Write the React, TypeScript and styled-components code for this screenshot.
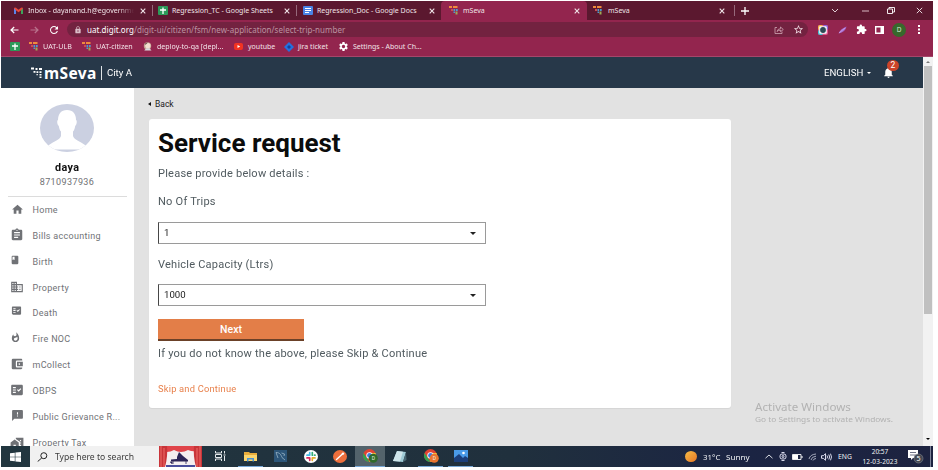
import React from "react";
import styled, { createGlobalStyle } from "styled-components";
import {
  MdHome, MdAssignment, MdBook, MdDomain, MdFactCheck, MdWhatshot,
  MdAccountBalanceWallet, MdFeedback, MdHomeWork, MdNotifications, MdExtension,
  MdSettings, MdLock, MdStarBorder, MdRefresh,
} from "react-icons/md";

const Global = createGlobalStyle`
  * { box-sizing: border-box; }
  body { margin: 0; background: #fff; overflow: hidden; }
  svg { display: block; flex: none; }
`;

const ui = '"Noto Sans", "Open Sans", sans-serif';
const app = 'Roboto, "Liberation Sans", sans-serif';

const Screen = styled.div`
  width: 932px;
  height: 466px;
  margin: 1px 0 0 1px;
  display: flex;
  flex-direction: column;
  overflow: hidden;
  font-family: ${app};
`;

/* A single-line label in a fixed slot; `$sx` stretches the glyphs. */
const Label = styled.span<{ $w?: number; $size: number; $ls?: number; $sx?: number; $ml?: number }>`
  display: block;
  flex: none;
  width: ${(p) => (p.$w ? `${p.$w}px` : "auto")};
  margin-left: ${(p) => p.$ml ?? 0}px;
  font-size: ${(p) => p.$size}px;
  letter-spacing: ${(p) => p.$ls ?? 0}px;
  transform: ${(p) => (p.$sx ? `scaleX(${p.$sx})` : "none")};
  transform-origin: left center;
  white-space: nowrap;
`;
const Slot = styled.span<{ $w: number; $ml?: number; $mt?: number }>`
  display: flex;
  flex: none;
  align-items: center;
  justify-content: center;
  width: ${(p) => p.$w}px;
  margin-left: ${(p) => p.$ml ?? 0}px;
  margin-top: ${(p) => p.$mt ?? 0}px;
`;

/* ---------- Browser chrome ---------- */
const TabStrip = styled.div`
  height: 19px;
  flex: none;
  display: flex;
  align-items: stretch;
  background: #5b182f;
  color: #f0e4e8;
  font-family: ${ui};
`;
const Tab = styled.div<{ $w: number; $pad: number; $end?: number; $active?: boolean; $sep?: boolean }>`
  width: ${(p) => p.$w}px;
  padding-left: ${(p) => p.$pad}px;
  padding-right: ${(p) => p.$end ?? 7}px;
  flex: none;
  display: flex;
  align-items: center;
  border-radius: 4px 4px 0 0;
  background: ${(p) => (p.$active ? "#93254e" : "transparent")};
  background-image: ${(p) => (p.$sep ? "linear-gradient(#96687a, #96687a)" : "none")};
  background-size: 1px 11px;
  background-position: right 4px;
  background-repeat: no-repeat;
`;
const TabTitle = styled(Label)<{ $fade?: boolean }>`
  mask-image: ${(p) => (p.$fade ? "linear-gradient(90deg, #000 85%, transparent)" : "none")};
`;
const Push = styled.span`
  flex: 1;
`;
const Toolbar = styled.div`
  height: 19px;
  flex: none;
  display: flex;
  align-items: center;
  background: #93254e;
  color: #f3dfe6;
  font-family: ${ui};
`;
const Omnibox = styled.div`
  width: 741px;
  height: 15px;
  margin-left: 8px;
  flex: none;
  display: flex;
  align-items: center;
  border-radius: 8px;
  background: #732240;
  color: #bb93a1;
`;
const Host = styled.b`
  font-weight: 400;
  color: #fff;
`;
const Profile = styled.span`
  width: 14px;
  height: 14px;
  margin-left: 8px;
  border-radius: 50%;
  background: #38682c;
  color: #d8ecd0;
  font-size: 6.5px;
  line-height: 14px;
  text-align: center;
`;
const Bookmarks = styled(Toolbar)`
  height: 18px;
  padding-bottom: 2px;
  color: #f2e2e8;
  border-bottom: 1px solid #a5466a;
`;

/* ---------- Application ---------- */
const Viewport = styled.div`
  flex: 1;
  min-height: 0;
  display: flex;
`;
const Page = styled.div`
  width: 922px;
  flex: none;
  display: flex;
  flex-direction: column;
`;
const Header = styled.header`
  height: 31px;
  flex: none;
  display: flex;
  align-items: center;
  background: #273849;
  color: #fff;
`;
const Brand = styled.span`
  width: 55px;
  margin-left: 1px;
  font: 700 15.5px/20px ${ui};
  letter-spacing: 0.4px;
`;
const Rule = styled.span`
  width: 1px;
  height: 14px;
  margin-left: 2px;
  background: #dfe3e6;
`;
const Bell = styled.span`
  position: relative;
  margin-left: 11px;
`;
const Count = styled.span`
  position: absolute;
  left: 5px;
  top: -6px;
  width: 12px;
  height: 11px;
  border-radius: 50%;
  background: #cc4329;
  font-size: 8.5px;
  line-height: 11px;
  text-align: center;
`;
const Columns = styled.div`
  flex: 1;
  min-height: 0;
  display: flex;
  background: #e2e2e2;
`;
const Sidebar = styled.aside`
  width: 133px;
  flex: none;
  overflow: hidden;
  background: #fff;
  color: #6f7174;
`;
const User = styled.div`
  height: 109px;
  margin: 0 7px;
  padding: 16px 1px 0 0;
  display: flex;
  flex-direction: column;
  align-items: center;
  border-bottom: 1px solid #dcdcdc;
`;
const UserName = styled.div`
  margin-top: 9px;
  color: #111;
  font-weight: 700;
  font-size: 10px;
  line-height: 14px;
  letter-spacing: 0.3px;
  transform: scaleX(1.08);
`;
const Phone = styled.div`
  font-size: 9px;
  line-height: 14px;
  letter-spacing: 0.4px;
`;
const NavRow = styled.a`
  height: 25.87px;
  padding-left: 9px;
  display: flex;
  align-items: center;
  color: #707276;
`;
const Main = styled.main`
  width: 582px;
  margin-left: 15px;
  color: #505a5f;
`;
const Back = styled.div`
  height: 31px;
  margin-left: -1px;
  display: flex;
  align-items: center;
  color: #1b1b1b;
`;
const Card = styled.section`
  height: 289px;
  padding: 8px 9px 0;
  border-radius: 3px;
  background: #fff;
  box-shadow: 0 1px 1px rgba(0, 0, 0, 0.06);
`;
const Title = styled.h1`
  margin: 0;
  height: 32px;
  font-size: 26px;
  line-height: 32px;
  font-weight: 700;
  color: #0b0c0c;
  white-space: nowrap;
`;
const Line = styled.div<{ $h: number }>`
  height: ${(p) => p.$h}px;
  display: flex;
  align-items: center;
`;
const Select = styled.div`
  width: 328px;
  height: 22px;
  padding: 0 9px 0 5px;
  display: flex;
  align-items: center;
  justify-content: space-between;
  border: 1px solid #9a9a9a;
  border-left-color: #464646;
  color: #222;
`;
const Next = styled.button`
  width: 146px;
  height: 22px;
  margin-top: 13px;
  padding: 1px 0 0;
  display: block;
  border: 0;
  border-bottom: 2px solid #6b4128;
  background: #e37e48;
  color: #fff;
  font: 500 10.5px/20px ${app};
`;
const Skip = styled(Line)`
  color: #e8814c;
`;
const Watermark = styled.div`
  margin: 312px 0 0 24px;
  font-family: ${ui};
  color: #b2b2b2;
  line-height: 13px;
`;
const Scrollbar = styled.div`
  width: 10px;
  display: flex;
  flex-direction: column;
  align-items: center;
  background: #f2f2f2;
`;
const Thumb = styled.div`
  width: 8px;
  height: 248px;
  margin: 3px 0 124px;
  background: #c0c0c0;
`;

/* ---------- Taskbar ---------- */
const Taskbar = styled.footer`
  height: 21px;
  flex: none;
  display: flex;
  align-items: stretch;
  background: linear-gradient(90deg, #22363f, #20303d 55%, #1b2443 80%, #1d2340);
  color: #f1f3f5;
  font-family: ${ui};
`;
const Search = styled.div`
  width: 129px;
  display: flex;
  align-items: center;
  background: #f1f1f1;
  color: #3c3c3c;
`;
const TaskButton = styled.span<{ $w: number; $open?: boolean; $active?: boolean; $ml?: number }>`
  width: ${(p) => p.$w}px;
  margin-left: ${(p) => p.$ml ?? 0}px;
  flex: none;
  display: flex;
  align-items: center;
  justify-content: center;
  border-bottom: ${(p) => (p.$open ? "1px solid #78a9d8" : "1px solid transparent")};
  background: ${(p) => (p.$active ? "#53636b" : "transparent")};
  background-clip: padding-box;
`;
const Tray = styled.div`
  flex: 1;
  display: flex;
  align-items: center;
`;
const Clock = styled.div`
  width: 38px;
  margin-left: 6px;
  flex: none;
  display: flex;
  flex-direction: column;
  align-items: center;
  line-height: 10px;
`;
const Edge = styled.span`
  width: 1px;
  height: 21px;
  margin-right: 2px;
  background: #7d8399;
`;

/* ---------- Drawings ---------- */
const Close = ({ s = 6, w = 1.1 }: { s?: number; w?: number }) => (
  <svg width={s} height={s} viewBox="0 0 6 6" stroke="currentColor" strokeWidth={w}><path d="M.7.7 5.3 5.3M5.3.7.7 5.3" /></svg>
);
const Gmail = () => (
  <svg width="9" height="7" viewBox="0 0 9 7"><path d="M0 1v6h2V2z" fill="#5a83e8" /><path d="M9 1v6H7V2z" fill="#3fa45b" /><path d="M0 1.2Q.5-.2 2 .8l2.500 2 2.500-2Q8.500-.2 9 1.200L7.500 3 4.500 5.200 1.500 3z" fill="#e9483b" /></svg>
);
const Sheets = () => (
  <svg width="10" height="9" viewBox="0 0 10 9"><rect width="10" height="9" rx="1" fill="#2c9a59" /><path d="M5 1.500v6.500M2 4h6" stroke="#fff" strokeWidth="1.300" /></svg>
);
const Docs = () => (
  <svg width="10" height="9" viewBox="0 0 10 9"><rect width="10" height="9" rx="1" fill="#4a83e4" /><path d="M2 2.500h6M2 4.500h6M2 6.500h4" stroke="#fff" strokeWidth="1" /></svg>
);
const Digit = () => (
  <svg width="9" height="9" viewBox="0 0 9 9">
    <path d="M0 0h3v2H0zM4 0h4.500v2H4z" fill="#ef8a3c" /><path d="M2 3h2v2H2z" fill="#c94f4f" /><path d="M4.500 3h1.700v2H4.500zM7 3h1.700v2H7zM4.500 5.500h1.500v1.500H4.500z" fill="#4c9bd0" /><path d="M6.500 5.500h2v3h-2z" fill="#9dab55" />
  </svg>
);
const MsevaMark = () => (
  <svg width="12" height="12" viewBox="0 0 12 12" fill="#fff">
    <path d="M0 .5h3v2H0zM4.500 1h2v2h-2zM8 1h3v2H8zM2.500 4h2v1.800h-2zM5.500 4.200h1.800V6H5.500zM8.500 4.200h2V6h-2zM5.500 7h1.300v1.300H5.500zM8.500 7h2v1.600h-2zM8.500 9.600h2v1.500h-2z" />
  </svg>
);
const Arrow = ({ flip = false }: { flip?: boolean }) => (
  <svg width="9" height="8" viewBox="0 0 9 8" fill="none" stroke={flip ? "#b9728c" : "#fff"} strokeWidth="1.200">
    <path d={flip ? "M.5 4h7.500M4.800 1 8 4 4.800 7" : "M8.500 4H1M4.200 1 1 4l3.200 3"} />
  </svg>
);
const Share = () => (
  <svg width="10" height="8" viewBox="0 0 10 8" fill="none" stroke="#cfa6b4" strokeWidth=".8"><path d="M3 1.500H1V7.500h7V5.500M3 5.500Q3.500 2.800 6.500 2.700V1L9.300 3.500 6.500 5.700V4.200Q4 4.200 3 5.500z" /></svg>
);
const Jenkins = () => (
  <svg width="9" height="9" viewBox="0 0 9 9"><circle cx="4.500" cy="4" r="3.700" fill="#c5a595" /><circle cx="4.800" cy="3.700" r="2.600" fill="#f2dfd0" /><path d="M1.500 8 3.500 6.200h3L8.500 8.500h-7z" fill="#d9d9dc" /><path d="M1.500 3Q2 .6 5 .6L3.200 2.300z" fill="#6a5248" /></svg>
);
const YouTube = () => (
  <svg width="9" height="7" viewBox="0 0 9 7"><rect width="9" height="7" rx="2" fill="#f23322" /><path d="M3.500 2v3L6.200 3.500z" fill="#fff" /></svg>
);
const Jira = () => (
  <svg width="10" height="10" viewBox="0 0 10 10"><path d="M5 0 10 5 5 10 0 5z" fill="#2371df" /><path d="M5 3 7 5 5 7 3 5z" fill="#16419c" /></svg>
);
const Camera = () => (
  <svg width="10" height="10" viewBox="0 0 10 10"><rect width="10" height="10" rx="2" fill="#e5568c" /><path d="M0 5V2Q0 0 2 0h3z" fill="#f3b64a" /><path d="M5 0h3q2 0 2 2v3z" fill="#8c63dc" /><path d="M0 5v3q0 2 2 2h3z" fill="#3ec7d2" /><rect x="1.200" y="1.200" width="7.600" height="7.600" rx="1" fill="#f4f7fb" /><circle cx="5" cy="5" r="2.900" fill="#2e4a55" /></svg>
);
const Feather = () => (
  <svg width="9" height="8" viewBox="0 0 9 8"><path d="M.5 7.500Q2 3 8.500.5 7.500 6 .5 7.500z" fill="#a66bd0" /><path d="M1 7 7 2" stroke="#dcb8f0" strokeWidth=".6" /></svg>
);
const Avatar = () => (
  <svg width="54" height="48" viewBox="0 0 54 48">
    <defs><clipPath id="oval"><ellipse cx="27" cy="24" rx="27" ry="24" /></clipPath></defs>
    <g clipPath="url(#oval)">
      <path d="M0 0h54v48H0z" fill="#cbd0e1" />
      <path d="M27 6c-6 0-9 4-9 10-1.200 0-1 4.500.8 6 .5 3 1.200 4.500 2.200 5.500V32c-1 4-7 5-12 9L0 45.500h54L45 41c-5-4-11-5-12-9v-4.500c1-1 1.700-2.500 2.200-5.500 1.800-1.500 2-6 .8-6 0-6-3-10-9-10z" fill="#fff" />
    </g>
  </svg>
);
const Caret = ({ w = 6, h = 3 }: { w?: number; h?: number }) => (
  <svg width={w} height={h} viewBox="0 0 6 3" preserveAspectRatio="none"><path d="M0 0h6L3 3z" fill="currentColor" /></svg>
);
const WinLogo = () => (
  <svg width="11" height="10" viewBox="0 0 11 10" fill="#fff"><path d="M0 1.300 4.800.7v4H0zM5.400.6 11 0v4.700H5.400zM0 5.300h4.800v4L0 8.700zM5.400 5.300H11V10l-5.600-.6z" /></svg>
);
const Piano = () => (
  <svg width="43" height="21" viewBox="0 0 43 21">
    <path d="M0 0h43v21H0z" fill="#f4eef0" /><path d="M0 0h43v3Q36 7 29 4q-7 4-14 0Q8 8 0 4z" fill="#e0444a" />
    <path d="M0 0h8Q9 10 6 21H0zM35 0h8v21h-6Q34 10 35 0z" fill="#c93439" />
    <path d="M2 0v21M5 2v19M38 2v19M41 0v21" stroke="#ee6c68" strokeWidth="1" />
    <path d="M18 11 20 6l4 4 5 4v1.500H12V13.500l6-.5z" fill="#2c2457" /><path d="M14 15v3M27 15v3M11 16h2v2" stroke="#2c2457" fill="#2c2457" strokeWidth=".8" /><path d="M7 19h29v2H7z" fill="#4a4e9c" />
  </svg>
);
const TaskView = () => (
  <svg width="11" height="10" viewBox="0 0 11 10" fill="none" stroke="#e5e9eb" strokeWidth="1"><path d="M.5 0v2h6V0M.5 10V8h6v2M.5 3.500h6v3h-6zM9.500 0v2.500M9.500 5v5" /><path d="M8.500 4h2" /></svg>
);
const Folder = () => (
  <svg width="13" height="11" viewBox="0 0 13 11"><path d="M0 1h5l1 1h7v8H0z" fill="#e9ad3c" /><path d="M0 4h13v6H0z" fill="#fbd66f" /><path d="M3 7h7v3.500H8.500V8.500h-4v2H3z" fill="#4b94d4" /></svg>
);
const Dolphin = () => (
  <svg width="13" height="12" viewBox="0 0 13 12"><rect width="13" height="12" fill="#2c5578" /><path d="M2 2.500c4 0 5 2.500 6 5l3 2.500M2 2.500l2 5.500M7.500 3l3 1-.5 2" fill="none" stroke="#a9c1d0" strokeWidth=".7" /></svg>
);
const Slack = () => (
  <svg width="14" height="13" viewBox="0 0 14 13"><ellipse cx="7" cy="6.500" rx="7" ry="6.500" fill="#fff" /><g strokeWidth="1.700" strokeLinecap="round"><path d="M5.700 2.500v2.700M3 5.200h2" stroke="#41bce8" /><path d="M8.300 2.500v2.700M11 5.200h-.5" stroke="#35ad79" /><path d="M8.300 7.900H11M8.300 10.300V8" stroke="#e4ad2f" /><path d="M5.700 7.900v2.400M3 7.900h2" stroke="#d92b5f" /></g></svg>
);
const Postman = () => (
  <svg width="14" height="13" viewBox="0 0 14 13"><ellipse cx="7" cy="6.500" rx="7" ry="6.500" fill="#ee6f3c" /><path d="M3.500 9.500 9.500 4" stroke="#fff" strokeWidth="1.400" strokeLinecap="round" /><circle cx="10" cy="3.600" r="1.200" fill="#fff" /></svg>
);
const Chrome = ({ badge }: { badge: string }) => (
  <svg width="16" height="14" viewBox="0 0 16 14">
    <circle cx="7.500" cy="6.500" r="6.500" fill="#e04434" /><path d="M1.500 4 7.500 13A6.500 6.500 0 0 1 1.500 4z" fill="#31a350" /><path d="M7.500 13A6.500 6.500 0 0 0 13.500 4H8z" fill="#f4c536" />
    <circle cx="7.500" cy="6.500" r="3.200" fill="#fff" /><circle cx="7.500" cy="6.500" r="2.400" fill="#3d7de0" />
    <circle cx="11.300" cy="9.300" r="4.500" fill={badge} /><text x="11.300" y="11.200" fontSize="5" fill="#e8f0e0" textAnchor="middle" fontFamily="Roboto">D</text>
  </svg>
);
const Notepad = () => (
  <svg width="14" height="13" viewBox="0 0 14 13"><path d="M4 1l9 1-3 10-10-1z" fill="#9fcad5" /><path d="M4 1l6 .7L7 11.500 0 11z" fill="#cfe5ea" /><path d="M10 12l3-10 .5 8z" fill="#496672" /></svg>
);
const Photos = () => (
  <svg width="14" height="12" viewBox="0 0 14 12"><path d="M0 0h14v12H0z" fill="#4a9be8" /><path d="M0 8l5-4 4 4 2-2 3 2v4H0z" fill="#1c3f7a" /><circle cx="9.500" cy="3" r="1.300" fill="#fff" /></svg>
);
const Chevron = ({ up = false }: { up?: boolean }) => (
  <svg width="8" height="5" viewBox="0 0 8 5" fill="none" stroke="currentColor" strokeWidth=".9"><path d={up ? "M.5 4.200 4 1l3.500 3.200" : "M1 1l3 3 3-3"} /></svg>
);

const nav = [
  { text: "Home", Icon: MdHome, size: 13, dx: 0, up: 1 },
  { text: "Bills accounting", Icon: MdAssignment, size: 14, dx: 0, up: 1 },
  { text: "Birth", Icon: MdBook, size: 10, dx: -2, up: 4 },
  { text: "Property", Icon: MdDomain, size: 14, dx: 0, up: 1 },
  { text: "Death", Icon: MdFactCheck, size: 11, dx: -1, up: 5 },
  { text: "Fire NOC", Icon: MdWhatshot, size: 11, dx: -2, up: 3 },
  { text: "mCollect", Icon: MdAccountBalanceWallet, size: 14, dx: 0, up: 2 },
  { text: "OBPS", Icon: MdFactCheck, size: 14, dx: 0, up: 1 },
  { text: "Public Grievance R...", Icon: MdFeedback, size: 13, dx: 0, up: 3 },
  { text: "Property Tax", Icon: MdHomeWork, size: 14, dx: 0, up: 0 },
];

export default function App() {
  return (
    <>
      <Global />
      <Screen>
        <TabStrip>
          <Tab $w={152} $pad={13} $sep>
            <Gmail /><TabTitle $ml={5} $w={106} $size={7} $fade>Inbox - dayanand.h@egovernme</TabTitle><Push /><Close />
          </Tab>
          <Tab $w={144} $pad={5} $sep>
            <Sheets /><TabTitle $ml={4} $w={106} $size={7}>Regression_TC - Google Sheets</TabTitle><Push /><Close />
          </Tab>
          <Tab $w={144} $pad={6} $end={6}>
            <Docs /><TabTitle $ml={4} $w={106} $size={7}>Regression_Doc - Google Docs</TabTitle><Push /><Close />
          </Tab>
          <Tab $w={146} $pad={8} $active>
            <Digit /><TabTitle $ml={5} $w={100} $size={7}>mSeva</TabTitle><Push /><Close />
          </Tab>
          <Tab $w={148} $pad={6} $end={10} $sep>
            <Digit /><TabTitle $ml={6} $w={100} $size={7}>mSeva</TabTitle><Push /><Close />
          </Tab>
          <Slot $w={20}><svg width="8" height="8" viewBox="0 0 8 8" stroke="#fff" strokeWidth="1.300"><path d="M4 0v8M0 4h8" /></svg></Slot>
          <Slot $w={12} $ml={74}><Chevron /></Slot>
          <Slot $w={8} $ml={20}><svg width="7" height="2" viewBox="0 0 7 2" fill="#d9b9c3"><path d="M0 .5h7v1H0z" /></svg></Slot>
          <Slot $w={8} $ml={18}><svg width="8" height="7" viewBox="0 0 8 7" fill="none" stroke="#fff" strokeWidth=".9"><path d="M.5 2h5v4.500h-5zM2 2V.5h5.500V5H5.500" /></svg></Slot>
          <Slot $w={8} $ml={20}><Close s={7} w={0.8} /></Slot>
        </TabStrip>
        <Toolbar>
          <Slot $w={9} $ml={9}><Arrow /></Slot>
          <Slot $w={9} $ml={11}><Arrow flip /></Slot>
          <Slot $w={11} $ml={9}><MdRefresh size={12} color="#fff" /></Slot>
          <Omnibox>
            <Slot $w={8} $ml={7}><MdLock size={8} color="#d9bdc7" /></Slot>
            <Label $w={682} $ml={5} $size={8} $ls={0.04}><Host>uat.digit.org</Host>/digit-ui/citizen/fsm/new-application/select-trip-number</Label>
            <Slot $w={10} $ml={5}><Share /></Slot>
            <Slot $w={10} $ml={9}><MdStarBorder size={11} color="#f0dce3" /></Slot>
          </Omnibox>
          <Slot $w={10} $ml={10}><Camera /></Slot>
          <Slot $w={9} $ml={10}><Feather /></Slot>
          <Slot $w={10} $ml={9}><MdExtension size={11} color="#fff" /></Slot>
          <Slot $w={9} $ml={9}><svg width="9" height="8" viewBox="0 0 9 8"><path d="M.7.700h7.600v6.600H.7z" fill="none" stroke="#fff" strokeWidth="1.400" /><path d="M5.500 1H8v6H5.500z" fill="#fff" /></svg></Slot>
          <Profile>D</Profile>
          <Slot $w={3} $ml={11}><svg width="2" height="9" viewBox="0 0 2 9" fill="#fff"><path d="M0 0h2v2H0zM0 3.500h2v2H0zM0 7h2v2H0z" /></svg></Slot>
        </Toolbar>
        <Bookmarks>
          <Slot $w={10} $ml={9}><Sheets /></Slot>
          <Slot $w={9} $ml={9}><Digit /></Slot><Label $w={34} $ml={5} $size={7} $sx={1.02}>UAT-ULB</Label>
          <Slot $w={9} $ml={5}><Digit /></Slot><Label $w={42} $ml={5} $size={7} $sx={1.02}>UAT-citizen</Label>
          <Slot $w={9} $ml={5}><Jenkins /></Slot><Label $w={72} $ml={5} $size={7} $sx={1.01}>deploy-to-qa [depl...</Label>
          <Slot $w={9} $ml={5}><YouTube /></Slot><Label $w={32} $ml={5} $size={7}>youtube</Label>
          <Slot $w={10} $ml={4}><Jira /></Slot><Label $w={35} $ml={4} $size={7}>jira ticket</Label>
          <Slot $w={10} $ml={5}><MdSettings size={11} color="#fff" /></Slot><Label $ml={5} $size={7}>Settings - About Ch...</Label>
        </Bookmarks>

        <Viewport>
          <Page>
            <Header>
              <Slot $w={12} $ml={30}><MsevaMark /></Slot>
              <Brand>mSeva</Brand>
              <Rule />
              <Label $ml={5} $size={9} $sx={1.07}>City A</Label>
              <Push />
              <Label $w={43} $size={9} $sx={1.07}>ENGLISH</Label>
              <Slot $w={4}><Caret w={4} h={2} /></Slot>
              <Bell><MdNotifications size={13} /><Count>2</Count></Bell>
              <Slot $w={28} />
            </Header>
            <Columns>
              <Sidebar>
                <User>
                  <Avatar />
                  <UserName>daya</UserName>
                  <Phone>8710937936</Phone>
                </User>
                {nav.map(({ text, Icon, size, dx, up }) => (
                  <NavRow key={text}>
                    <Slot $w={14} $ml={dx} $mt={-up}><Icon size={size} /></Slot>
                    <Label $ml={8.5 - dx} $size={9} $ls={0.3}>{text}</Label>
                  </NavRow>
                ))}
              </Sidebar>
              <Main>
                <Back>
                  <svg width="3" height="4" viewBox="0 0 3 4"><path d="M3 0v4L0 2z" fill="#111" /></svg>
                  <Label $ml={4} $size={8.5}>Back</Label>
                </Back>
                <Card>
                  <Title>Service request</Title>
                  <Line $h={29}><Label $size={10.5} $ls={0.2} $sx={1.053}>Please provide below details :</Label></Line>
                  <Line $h={27}><Label $size={10.5} $ls={0.2} $sx={1.053}>No Of Trips</Label></Line>
                  <Line $h={7} />
                  <Select><Label $size={9} $sx={1.07}>1</Label><Caret /></Select>
                  <Line $h={40}><Label $size={10.5} $ls={0.2} $sx={1.053}>Vehicle Capacity (Ltrs)</Label></Line>
                  <Select><Label $size={9} $sx={1.07}>1000</Label><Caret /></Select>
                  <Next>Next</Next>
                  <Line $h={25}><Label $size={10.5} $ls={0.2} $sx={1.053}>If you do not know the above, please Skip &amp; Continue</Label></Line>
                  <Skip $h={46}><Label $size={9} $ls={0.2} $sx={1.035}>Skip and Continue</Label></Skip>
                </Card>
              </Main>
              <Watermark>
                <Label $size={11} $sx={1.055}>Activate Windows</Label>
                <Label $size={7.5} $sx={1.11}>Go to Settings to activate Windows.</Label>
              </Watermark>
            </Columns>
          </Page>
          <Scrollbar>
            <Slot $w={8} $mt={4}><svg width="4" height="2" viewBox="0 0 4 2"><path d="M0 2h4L2 0z" fill="#777" /></svg></Slot>
            <Thumb />
            <Caret w={4} h={2} />
          </Scrollbar>
        </Viewport>

        <Taskbar>
          <Slot $w={29}><WinLogo /></Slot>
          <Search>
            <Slot $w={11} $ml={7}><svg width="11" height="10" viewBox="0 0 11 10" fill="none" stroke="#222" strokeWidth="1"><circle cx="6.800" cy="3.700" r="3" /><path d="M4.700 6 .7 9.500" /></svg></Slot>
            <Label $ml={7} $size={8.5} $sx={1.01}>Type here to search</Label>
          </Search>
          <Piano />
          <TaskButton $w={11} $ml={13}><TaskView /></TaskButton>
          <TaskButton $w={25} $ml={12} $open><Folder /></TaskButton>
          <TaskButton $w={13} $ml={11}><Dolphin /></TaskButton>
          <TaskButton $w={14} $ml={17}><Slack /></TaskButton>
          <TaskButton $w={14} $ml={15}><Postman /></TaskButton>
          <TaskButton $w={30} $ml={8} $open $active><Chrome badge="#2f6a2b" /></TaskButton>
          <TaskButton $w={14} $ml={8}><Notepad /></TaskButton>
          <TaskButton $w={25} $ml={11} $open><Chrome badge="#ea7430" /></TaskButton>
          <TaskButton $w={25} $ml={5} $open><Photos /></TaskButton>
          <Tray>
            <Slot $w={12} $ml={212}><svg width="12" height="11" viewBox="0 0 12 11"><defs><linearGradient id="sun" x2="1" y2="1"><stop stopColor="#f6bd45" /><stop offset="1" stopColor="#e77626" /></linearGradient></defs><ellipse cx="6" cy="5.500" rx="6" ry="5.500" fill="url(#sun)" /></svg></Slot>
            <Label $w={23} $ml={6} $size={7.5} $sx={1.05}>31°C</Label>
            <Label $w={38} $size={7.5} $sx={1.08}>Sunny</Label>
            <Slot $w={9}><Chevron up /></Slot>
            <Slot $w={8} $ml={6}><svg width="8" height="9" viewBox="0 0 8 9" fill="none" stroke="#eef" strokeWidth=".9"><rect x="1" y="2" width="6" height="5" rx="2" /><circle cx="4" cy="4.500" r="1" /><path d="M2.500.5h3M2.500 8.500h3" /></svg></Slot>
            <Slot $w={11} $ml={5}><svg width="11" height="6" viewBox="0 0 11 6"><path d="M.5.500h8.500v5H.5z" fill="none" stroke="#fff" strokeWidth=".9" /><path d="M1 1h5v4H1zM9.500 2h1v2h-1z" fill="#fff" /></svg></Slot>
            <Slot $w={9} $ml={5}><svg width="9" height="8" viewBox="0 0 9 8" fill="none" stroke="#b4b9c8" strokeWidth=".9"><path d="M1 6Q2 1.500 8 1M3 7Q3.500 3.700 8 3.200M5 7.500Q5.500 5.700 8 5.500" /></svg></Slot>
            <Slot $w={11} $ml={4}><svg width="11" height="8" viewBox="0 0 11 8" fill="none" stroke="#eef" strokeWidth=".9"><path d="M.5 2.700h1.800L4.500.700v6.600L2.300 5.300H.5zM6 2.500q1 1.500 0 3M7.800 1.500q1.600 2.500 0 5M9.500.700q2 3.300 0 6.600" /></svg></Slot>
            <Label $w={17} $ml={6} $size={6.8}>ENG</Label>
            <Clock><Label $size={6.5}>20:57</Label><Label $size={6.5} $ls={0.1}>12-03-2023</Label></Clock>
            <Slot $w={17} $ml={8}><svg width="16" height="15" viewBox="0 0 16 15"><path d="M0 1h10v8H5L3 11V9H0z" fill="#fff" /><path d="M2 3.500h6M2 6h6" stroke="#4c5269" strokeWidth=".8" /><circle cx="10.500" cy="9.500" r="4.500" fill="#444852" stroke="#7e838d" strokeWidth=".6" /><text x="10.500" y="12" fontSize="7" fill="#fff" textAnchor="middle" fontFamily="Noto Sans">5</text></svg></Slot>
            <Push />
            <Edge />
          </Tray>
        </Taskbar>
      </Screen>
    </>
  );
}
